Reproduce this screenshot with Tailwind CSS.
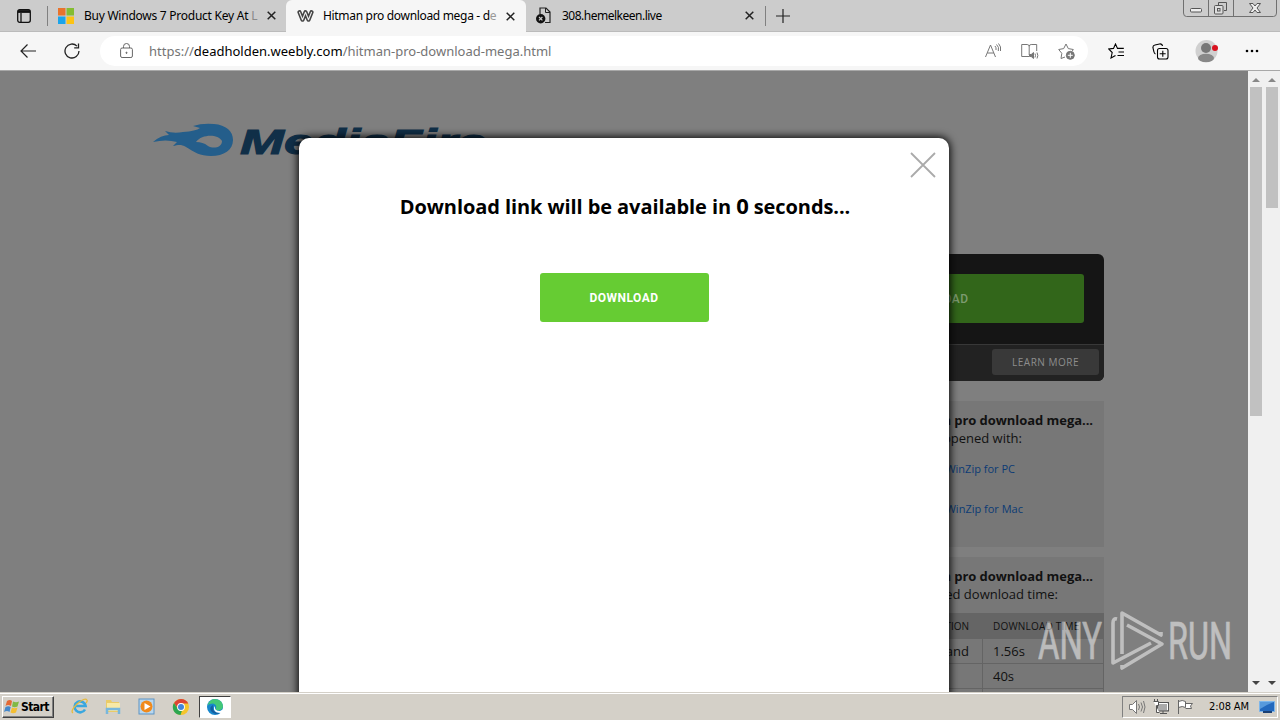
<!DOCTYPE html>
<html lang="en">
<head>
  <meta charset="UTF-8" />
  <meta name="viewport" content="width=device-width, initial-scale=1.0" />
  <title>Hitman pro download mega</title>
  <script src="https://cdn.jsdelivr.net/npm/@tailwindcss/browser@4"></script>
</head>
<body class="flex h-[720px] w-[1280px] flex-col overflow-hidden bg-[#f6f6f6] font-['Open_Sans',sans-serif] text-black">

  <!-- Tab strip -->
  <header class="flex h-8 shrink-0 items-stretch bg-[#cccccc] font-['Noto_Sans',sans-serif] text-[12px]">
    <div class="flex w-[47px] items-center justify-center border-b border-[#bbb]">
      <svg class="ml-px" width="14" height="14" viewBox="0 0 14 14" fill="none" stroke="#111" stroke-width="1.3"><rect x=".7" y=".7" width="12.6" height="12.6" rx="2"/><path d="M1 2.500h12" stroke-width="2.8"/><path d="M4 4v9"/></svg>
    </div>
    <div class="flex w-[239px] items-center border-b border-[#bbb]">
      <span class="h-5 w-px bg-[#808080]"></span>
      <svg class="ml-2.5 shrink-0" width="16" height="16"><path fill="#e8732c" d="M0 0h7.5v7.5H0z"/><path fill="#84bd32" d="M8.5 0H16v7.5H8.5z"/><path fill="#1ba4ea" d="M0 8.500h7.500V16H0z"/><path fill="#fcc314" d="M8.500 8.500H16V16H8.500z"/></svg>
      <span class="ml-2.5 w-[174px] whitespace-nowrap tracking-[-0.25px]">Buy Windows 7 Product Key At <span class="text-[#888]">L</span></span>
      <svg class="ml-[9px] shrink-0" width="9" height="9" stroke="#222" stroke-width="1.5"><path d="M.7.7l7.600 7.600M8.300.7L.7 8.300"/></svg>
    </div>
    <div class="flex w-[240px] items-center rounded-t-md bg-[#f6f6f6]">
      <svg class="ml-[11px] shrink-0" width="17" height="14" viewBox="0 0 17 14" fill="none" stroke="#444" stroke-linejoin="round" stroke-linecap="round"><path stroke-width="4.200" d="M2.500 3.200l3 7.500 3-7.500 3 7.500 3-7.500"/><path stroke="#eee" stroke-width="1.100" d="M2.500 3.200l3 7.500 3-7.500 3 7.500 3-7.500"/></svg>
      <span class="ml-[9px] w-[175px] whitespace-nowrap tracking-[-0.32px]">Hitman pro download mega - d<span class="text-[#999]">e</span></span>
      <svg class="ml-2 shrink-0" width="9" height="9" stroke="#222" stroke-width="1.500"><path d="M.7.7l7.600 7.600M8.300.7L.7 8.300"/></svg>
    </div>
    <div class="flex w-[240px] items-center border-b border-[#bbb]">
      <svg class="ml-2.5 shrink-0" width="15" height="17" viewBox="0 0 15 17"><path d="M4 7V1h6l4 4v10.500H9" fill="none" stroke="#222" stroke-width="1.200"/><path d="M9.500 1v4.500H14" fill="none" stroke="#222"/><circle cx="4.700" cy="11.700" r="4.700" fill="#111"/><path d="M3 10l3.400 3.400M6.400 10L3 13.400" stroke="#ccc" stroke-width="1.200"/></svg>
      <span class="ml-[11px] w-[175px] whitespace-nowrap tracking-[-0.5px]">308.hemelkeen.live</span>
      <svg class="ml-2 shrink-0" width="9" height="9" stroke="#222" stroke-width="1.500"><path d="M.7.7l7.600 7.600M8.300.7L.7 8.300"/></svg>
      <span class="ml-auto h-5 w-px bg-[#808080]"></span>
    </div>
    <div class="flex flex-1 items-center border-b border-[#bbb]">
      <svg class="ml-2.5" width="14" height="14" stroke="#222" stroke-width="1.200"><path d="M7 0v14M0 7h14"/></svg>
      <svg class="mb-auto ml-auto mr-[3px]" width="94" height="17" fill="none" stroke="#707070"><path d="M.5 0v13q0 3.500 3 3.500h87q3 0 3-3.500V0M25.500 0v16M50.500 0v16"/><g stroke="#555"><rect x="7.500" y="8.500" width="11" height="3.500" rx="1" fill="#eee"/><path d="M35.500 5V2.500h8v8H41" /><rect x="31.500" y="5.500" width="8.500" height="8.500" rx="1" fill="#ddd"/><rect x="34.500" y="8.500" width="2.500" height="2.500"/><path fill="#eee" d="M66.500 3.500h3.500l2 2.500 2-2.500h3.500l-3.500 4.500 3.500 4.500h-3.500l-2-2.500-2 2.500h-3.500l3.500-4.500z"/></g></svg>
    </div>
  </header>

  <!-- Toolbar -->
  <nav class="flex h-[39px] shrink-0 items-center border-b border-[#a8a8a8] bg-[#f6f6f6] font-['Noto_Sans',sans-serif]">
    <svg class="ml-5 shrink-0" width="16" height="14" fill="none" stroke="#222" stroke-width="1.200"><path d="M16 7H1M7.500.5L1 7l6.500 6.500"/></svg>
    <svg class="ml-7 shrink-0" width="16" height="16" fill="none" stroke="#222" stroke-width="1.300"><path d="M15 8A7 7 0 1 1 13 3.100M14.500.5v4.300h-4.300"/></svg>
    <div class="ml-5 flex h-[30px] w-[988px] items-center rounded-full bg-white text-[13px]">
      <svg class="ml-5 shrink-0" width="13" height="16" fill="none" stroke="#666"><rect x=".6" y="5" width="11.800" height="9.500" rx="1.500"/><path d="M3.500 5V3.500a3 3 0 0 1 6 0V5"/><circle cx="6.500" cy="9.800" r=".6" fill="#666"/></svg>
      <div class="mt-0.5 ml-4 whitespace-nowrap text-[#747474]">https://<span class="text-black">deadholden.weebly.com</span>/hitman-pro-download-mega.html</div>
      <div class="ml-auto mr-[13px] flex items-center gap-[19px] text-[#777]">
        <svg width="17" height="16" fill="none" stroke="currentColor"><path d="M.5 14L5.500 2l5 12M2.300 10h6.500M10 3q1.500 1.500 1 4M11.500 1.500q3 2.500 1.800 6.500M13.500.5q3 3 2 7.500"/></svg>
        <svg width="18" height="16" fill="none" stroke="currentColor"><path d="M8 13.500H.7V1.500h5.500q2 0 2 2v8.500M8.200 3.500q0-2 2-2h5.500V8"/><path d="M8.500 11.500h1.700l2.300-2v6l-2.300-2H8.500z" fill="currentColor"/><path d="M14 10.500q1 2 0 4M16 9.500q1.700 3 0 6"/></svg>
        <svg width="17" height="17" fill="none" stroke="currentColor"><path d="M7 14l-4 1.500.8-5.200L.7 6.500l5-.9L8 1l2.300 4.600 5 .9-1 1.500"/><circle cx="12.300" cy="12.300" r="4" fill="currentColor"/><path d="M12.300 9.800v5M9.800 12.300h5" stroke="#fff"/></svg>
      </div>
    </div>
    <div class="flex items-center text-black">
      <svg class="ml-5" width="17" height="16" fill="none" stroke="currentColor" stroke-width="1.100"><path d="M7.500 12.500L3 15l1.200-5.500L.7 6l4.800-.6L7.500 1l2 4.400h6.300M10.500 9h5.500M9.500 12.500H16"/></svg>
      <svg class="ml-[27px]" width="17" height="17" fill="none" stroke="currentColor" stroke-width="1.100"><path d="M10.500 3q-.5-2.500-3-2L3 2Q.5 2.500 1 5l1 4q.3 1.500 1.500 2"/><rect x="5.500" y="5.500" width="10.500" height="10.500" rx="2"/><path d="M10.800 7.700v6M7.700 10.800h6"/></svg>
      <svg class="ml-[26px]" width="24" height="24"><circle cx="11.500" cy="12" r="11" fill="#d0d0d0"/><circle cx="11" cy="9" r="5" fill="#777"/><ellipse cx="11" cy="19" rx="8" ry="4.300" fill="#888"/><circle cx="20" cy="9" r="3" fill="#d9121f"/></svg>
      <svg class="ml-[26px]" width="14" height="4"><circle cx="2" cy="2" r="1.300"/><circle cx="7" cy="2" r="1.300"/><circle cx="12" cy="2" r="1.300"/></svg>
    </div>
  </nav>

  <!-- Viewport -->
  <main class="flex h-[621px] shrink-0">
    <div class="relative w-[1248px] overflow-hidden bg-[#7f7f7f]">
      <div class="flex h-[91px] items-start pt-[52px] pl-[153px]">
        <svg width="81" height="34" viewBox="0 0 81 34" fill="#245e8b"><path fill-rule="evenodd" d="M0 19Q8 12 16 12L12 8q9 3 18 1 13-1 17-4l-7-2Q49 0 61 1c12 1 19 7 19 16 0 10-9 16-22 16-11 0-17-4-25-9-5-3-8-2-13-1l4-4Q13 16 0 19zM43 19c6-8 22-8 26-1 0 7-9 8-14 5-4-3-7-4-12-4z"/></svg>
        <span class="ml-1.5 origin-left scale-x-[1.51] font-['Liberation_Sans',sans-serif] text-[35px] leading-[38px] font-bold italic text-[#102f48] [-webkit-text-stroke:1px_#102f48]">MediaFire</span>
      </div>

      <aside class="mt-[92px] ml-[764px] w-[340px] text-[13px] leading-[18px] text-[#111]">
        <section class="overflow-hidden rounded-md bg-[#151515]">
          <div class="h-[90px] p-5">
            <div class="flex h-[49px] items-center justify-center rounded-[3px] bg-[#32661a] font-['Roboto',sans-serif] text-[12px] font-medium tracking-[0.5px] text-[#7d9b70]">DOWNLOAD</div>
          </div>
          <div class="flex h-[37px] items-start justify-end border-t border-[#383838] bg-[#222] pt-1 pr-[5px]">
            <div class="flex h-[26px] w-[107px] items-center justify-center rounded-[3px] bg-[#393939] text-[10px] tracking-[0.5px] text-[#8d8d8d]">LEARN MORE</div>
          </div>
        </section>
        <section class="mt-5 h-[146px] bg-[#777] pt-2.5 whitespace-nowrap">
          <div class="w-[329px] text-right font-bold tracking-[-0.05px]">Hitman pro download mega...</div>
          <div class="w-[258px] text-right">can be opened with:</div>
          <div class="mt-[13px] w-[251px] text-right text-[11px] text-[#0b3b75]">WinZip for PC</div>
          <div class="mt-[22px] w-[259px] text-right text-[11px] text-[#0b3b75]">WinZip for Mac</div>
        </section>
        <section class="mt-2.5 h-[150px] bg-[#777] pt-2.5 whitespace-nowrap">
          <div class="w-[329px] text-right font-bold tracking-[-0.05px]">Hitman pro download mega...</div>
          <div class="w-[294px] text-right">Estimated download time:</div>
          <div class="mt-2.5 grid h-[26px] grid-cols-[219px_121px] items-center bg-[#656565] text-[10px]">
            <span class="pr-[14px] text-right">CONNECTION</span><span class="pl-2.5 tracking-[0.2px]">DOWNLOAD TIME</span>
          </div>
          <div class="grid grid-cols-[219px_121px] border-r border-[#646464]">
            <span class="h-[25px] border-r border-b border-[#646464] pt-[3px] pr-[13px] text-right">Broadband</span><span class="h-[25px] border-b border-[#646464] pt-[3px] pl-2.5">1.56s</span>
            <span class="h-[25px] border-r border-b border-[#646464]"></span><span class="h-[25px] border-b border-[#646464] pt-[3px] pl-2.5">40s</span>
            <span class="h-[25px] border-r border-[#646464]"></span><span></span>
          </div>
        </section>
      </aside>

      <!-- Download dialog -->
      <div class="absolute top-[67px] left-[299px] flex h-[620px] w-[650px] flex-col items-center rounded-[10px] bg-white shadow-[0_0_9px_1px_#000]">
        <svg class="absolute top-[14px] right-[13px]" width="26" height="26" stroke="#aaa" stroke-width="1.800"><path d="M1 1l24 24M25 1L1 25"/></svg>
        <h1 class="mt-[55px] ml-0.5 h-7 text-[20px] leading-7 font-bold tracking-[-0.08px] whitespace-nowrap">Download link will be available in <span class="text-[22px] leading-none">0</span> seconds...</h1>
        <button class="mt-[52px] h-[49px] w-[169px] rounded-[3px] bg-[#66cc33] font-['Roboto',sans-serif] text-[12px] font-bold tracking-[0.5px] text-white">DOWNLOAD</button>
      </div>

      <!-- Watermark -->
      <div class="absolute top-[538px] left-[1038px] text-white opacity-50">
        <svg width="194" height="64" fill="none" stroke="currentColor" stroke-width="3.600" stroke-linejoin="round"><g font-family="Roboto" font-size="52" fill="currentColor" stroke-width=".7"><text x="0" y="50" textLength="64" lengthAdjust="spacingAndGlyphs">ANY</text><text x="130" y="50" textLength="64" lengthAdjust="spacingAndGlyphs">RUN</text></g><path d="M79 10q-4-1-4 4v40l38-20"/><path d="M84 45V4l39 22v-3"/><path d="M89 16l35 19-40 24v-3"/></svg>
      </div>
    </div>
    <div class="flex w-4 flex-col items-center bg-[#f0f0f0]">
      <svg class="mt-[6px] shrink-0" width="8" height="5"><path fill="#888" d="M0 5l4-4 4 4z"/></svg>
      <div class="mt-[5px] h-[329px] w-3 bg-[#c1c1c1]"></div>
      <svg class="mt-auto mb-1.5 shrink-0" width="8" height="5"><path fill="#444" d="M0 0l4 4 4-4z"/></svg>
    </div>
    <div class="flex w-4 flex-col items-center bg-[#f0f0f0]">
      <svg class="mt-[6px] shrink-0" width="8" height="5"><path fill="#888" d="M0 5l4-4 4 4z"/></svg>
      <div class="mt-[5px] h-[121px] w-3 bg-[#c1c1c1]"></div>
      <svg class="mt-auto mb-1.5 shrink-0" width="8" height="5"><path fill="#444" d="M0 0l4 4 4-4z"/></svg>
    </div>
  </main>

  <!-- Taskbar -->
  <footer class="flex h-7 shrink-0 items-center border-t border-[#d4d0c8] bg-[#d4d0c8] shadow-[inset_0_1px_#fff] font-['DejaVu_Sans_Condensed','DejaVu_Sans',sans-serif] text-[11px]">
    <div class="mt-px ml-0.5 flex h-[22px] w-[52px] items-center border border-t-white border-r-[#404040] border-b-[#404040] border-l-white pl-px shadow-[inset_-1px_-1px_#808080]">
      <svg class="shrink-0" width="16" height="16"><path fill="#e46a35" d="M3 2q3-2 5 0L7 7Q4 5 1.500 7z"/><path fill="#81b944" d="M9 2.500q3 1.500 6 0L13.500 7.500q-3 1.500-5.500 0z"/><path fill="#4588cb" d="M1.500 8q3-1.500 5.200 0L5.500 13q-2.500-2-5.500 0z"/><path fill="#f4be32" d="M8 8.500q2.500 1.500 5.500 0L12 13.500q-3 1.500-5.500 0z"/></svg>
      <span class="ml-px text-[12px] font-bold tracking-[-0.6px]">Start</span>
    </div>
    <svg class="ml-[17px] shrink-0" width="18" height="18" fill="none"><path d="M14 11.500a5.500 5.500 0 1 1 .6-3.500H5" stroke="#39a7df" stroke-width="2.600"/><path d="M2 15Q-1 13 6 6q8-7 10-4 .7 1-1 3" stroke="#e6ba3d" stroke-width="1.300"/></svg>
    <svg class="ml-[15px] shrink-0" width="18" height="18"><path fill="#eacb68" d="M2 2h5l1 2h7v10H2z"/><path fill="#f8e9a6" d="M3 5h13v8H3z"/><path fill="none" stroke="#78b7dc" stroke-width="2.500" d="M3 16v-5h12v5"/></svg>
    <svg class="ml-4 shrink-0" width="18" height="18"><rect x="1" y="1" width="15" height="15" fill="#b8d7ef" stroke="#5d94c4"/><circle cx="8.500" cy="8.500" r="6" fill="#f08a1c"/><path fill="#fff" d="M6.500 5l6 3.500-6 3.500z"/></svg>
    <svg class="ml-4 shrink-0" width="18" height="18"><circle cx="9" cy="9" r="8" fill="#f5c52c"/><path fill="#dc4435" d="M2 5Q5 1 9 1q5 0 7.300 4.500H9Q5.500 6 5.500 10z"/><path fill="#2ca650" d="M2 5l4 6q1.500 2 4 1.500L8.500 17Q3 16.500 1.300 12 0 8 2 5z"/><circle cx="9" cy="9" r="3.900" fill="#fff"/><circle cx="9" cy="9" r="3" fill="#4285dc"/></svg>
    <div class="ml-[9px] mt-px flex h-[22px] w-8 items-center justify-center border border-t-[#404040] border-r-white border-b-white border-l-[#404040] bg-white">
      <svg width="18" height="18"><circle cx="9" cy="9" r="8" fill="#1787cc"/><path fill="#43c878" d="M8 1q8 0 9 7 0 4-5 4.500-3-.5-2-2 1-4-3-5-4 0-5.500 2Q3 2 8 1z"/><path fill="#145d9f" d="M7 7q-4 2-2 6 3 4.500 9 2-6 0-7-4-.5-2 0-4z"/><path fill="#fff" d="M9 8q-1 5 5 5l3.500-2v4.500l-2.500-.5q-6 0-7-3.500Q7.500 9 9 8z"/></svg>
    </div>
    <div class="mt-px mr-[2px] ml-auto flex h-[22px] w-[156px] items-center border border-t-[#808080] border-r-white border-b-white border-l-[#808080]">
      <svg class="ml-1.5 shrink-0" width="17" height="16" fill="none" stroke="#777"><path fill="#fff" d="M.5 5.500h3l4-4v13l-4-4h-3z"/><path d="M9.500 5q2 3 0 6M12 3.500q3 4.500 0 9M14.500 2q3 6 0 12"/></svg>
      <svg class="ml-[7px] shrink-0" width="17" height="16" fill="none" stroke="#555"><rect x="4.500" y="3.500" width="11" height="8.500" fill="#aaa"/><path stroke="#fff" d="M5.500 4.500h9v6.500"/><path d="M7 14.500h7M10 12v2"/><path fill="#fff" d="M.5 2.500h5v4h-2v7h3M1.500 0v2M4.500 0v2"/></svg>
      <svg class="ml-[7px] shrink-0" width="17" height="16" fill="#fff" stroke="#666"><path d="M1.500 1v14M1.500 2.500q4-2 7 0v6q-3-2-7 0M8.500 4.500h7l-2 2.500 1 2.500h-6"/></svg>
      <span class="ml-[15px] whitespace-nowrap tracking-[-0.1px]">2:08 AM</span>
      <svg class="ml-auto mr-px shrink-0" width="17" height="14"><path fill="#2368bd" stroke="#7db6eb" d="M.5 1.500h15v10H.5z"/><path fill="#5799dc" d="M1 2h14Q8 4 1 9z"/><path fill="#193f73" d="M4 11h9v2H4z"/></svg>
    </div>
  </footer>
</body>
</html>
